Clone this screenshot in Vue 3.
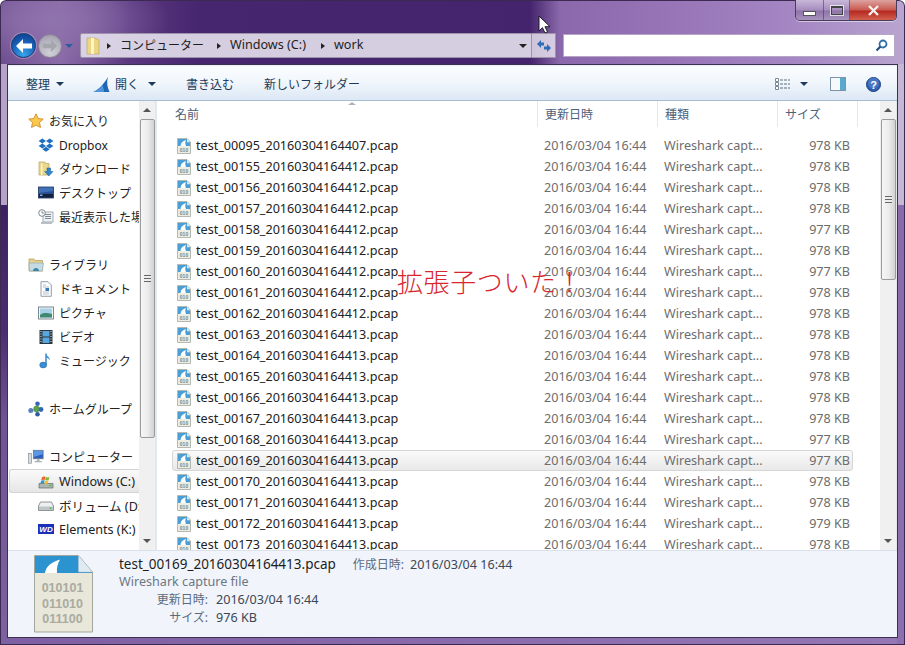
<script setup>
const sidebar = [
  { items: [
    { label: 'お気に入り', icon: 'i-star', head: true },
    { label: 'Dropbox', icon: 'i-dropbox' },
    { label: 'ダウンロード', icon: 'i-download' },
    { label: 'デスクトップ', icon: 'i-desktop' },
    { label: '最近表示した場所', icon: 'i-recent' },
  ] },
  { items: [
    { label: 'ライブラリ', icon: 'i-library', head: true },
    { label: 'ドキュメント', icon: 'i-doc' },
    { label: 'ピクチャ', icon: 'i-picture' },
    { label: 'ビデオ', icon: 'i-video' },
    { label: 'ミュージック', icon: 'i-music' },
  ] },
  { items: [{ label: 'ホームグループ', icon: 'i-home', head: true }] },
  { items: [
    { label: 'コンピューター', icon: 'i-computer', head: true },
    { label: 'Windows (C:)', icon: 'i-windows', active: true, wide: true },
    { label: 'ボリューム (D:)', icon: 'i-volume', wide: true },
    { label: 'Elements (K:)', icon: 'i-wd', wide: true },
  ] },
]

// [number, timestamp suffix, size]
const files = [
  ['00095', '164407', 978], ['00155', '164412', 978], ['00156', '164412', 978],
  ['00157', '164412', 978], ['00158', '164412', 977], ['00159', '164412', 978],
  ['00160', '164412', 977], ['00161', '164412', 978], ['00162', '164412', 978],
  ['00163', '164413', 978], ['00164', '164413', 978], ['00165', '164413', 978],
  ['00166', '164413', 978], ['00167', '164413', 978], ['00168', '164413', 977],
  ['00169', '164413', 977], ['00170', '164413', 978], ['00171', '164413', 978],
  ['00172', '164413', 979], ['00173', '164413', 978],
].map(([num, time, size]) => ({
  name: `test_${num}_20160304${time}.pcap`,
  size: `${size} KB`,
  selected: num === '00169',
}))
</script>

<template>
  <div class="window">
    <!-- shared icon shapes -->
    <svg class="defs" aria-hidden="true">
      <symbol id="i-star" viewBox="0 0 16 16">
        <path d="M8 .8l2.2 4.7 5 .6-3.7 3.4 1 5L8 12.1l-4.5 2.4 1-5L.8 6.1l5-.6z" fill="#f8c94e" stroke="#d58a25" stroke-width=".9" />
      </symbol>
      <symbol id="i-dropbox" viewBox="0 0 16 16">
        <path d="M4.3 1.5L.6 4l3.7 2.5L8 4zM11.7 1.5L8 4l3.7 2.5L15.4 4zM4.3 6.5L.6 9l3.7 2.5L8 9zM11.7 6.5L8 9l3.7 2.5L15.4 9zM4.3 12.2L8 14.8l3.7-2.6L8 9.8z" fill="#1f6fc4" />
      </symbol>
      <symbol id="i-download" viewBox="0 0 16 16">
        <path d="M1 1h6l1 1.5h3V14H1z" fill="#e9d78e" stroke="#b7a260" stroke-width=".7" />
        <path d="M3 2.5h1.5V14H3z" fill="#fff3c0" />
        <path d="M9 7h3.6v3.5H15L10.8 15 6.6 10.5H9z" fill="#2d86cf" stroke="#1c5b96" stroke-width=".5" />
      </symbol>
      <symbol id="i-desktop" viewBox="0 0 16 16">
        <rect x=".5" y="2" width="15" height="11" fill="#2a4f92" stroke="#22345f" stroke-width=".8" />
        <path d="M1 9h14v3.6H1z" fill="#14213e" />
        <path d="M2 9.5h2.5v1.6H2z" fill="#7fb0e6" />
        <path d="M1 2.5h14V6L1 8z" fill="#3f70b8" />
      </symbol>
      <symbol id="i-recent" viewBox="0 0 16 16">
        <rect x="5" y="3" width="10" height="10" fill="#eef2f5" stroke="#8c969e" stroke-width=".8" />
        <path d="M7 5.5h6M7 7.5h6M7 9.5h6" stroke="#7e8a93" stroke-width="1" />
        <path d="M3 13h11v2H3z" fill="#b9c0c5" />
        <circle cx="4" cy="4" r="3.3" fill="#fff" stroke="#7e8a93" />
        <path d="M4 2.2V4h1.8" fill="none" stroke="#55606a" stroke-width=".8" />
      </symbol>
      <symbol id="i-library" viewBox="0 0 16 16">
        <path d="M1 2h5l1 1.5h7.5V14H1z" fill="#e7d48c" stroke="#a99657" stroke-width=".7" />
        <path d="M1 6h14.5L14.500 14h-13z" fill="#c6dbe3" stroke="#8aa3ae" stroke-width=".6" />
        <path d="M5 14c0-4 6-4 6 0z" fill="#3b86a8" />
      </symbol>
      <symbol id="i-doc" viewBox="0 0 16 16">
        <path d="M3 .7h7L13.3 4v11.3H3z" fill="#fbfcfd" stroke="#8894a0" stroke-width=".9" />
        <path d="M5 4h3M5 6h6M5 11h6M5 13h6" stroke="#a9b2ba" stroke-width=".8" />
        <rect x="7.5" y="7" width="3.5" height="3" fill="#3b75b8" />
      </symbol>
      <symbol id="i-picture" viewBox="0 0 16 16">
        <rect x=".5" y="2" width="15" height="12" fill="#f4f7f8" stroke="#6f7d86" stroke-width=".9" />
        <rect x="2" y="3.5" width="12" height="9" fill="#a8d0e6" />
        <path d="M2 10c3-2.5 6-2.5 12-1v3.5H2z" fill="#3f8a6e" />
      </symbol>
      <symbol id="i-video" viewBox="0 0 16 16">
        <rect x="1.5" y="1" width="13" height="14" fill="#2c3640" />
        <rect x="4.5" y="2" width="7" height="5.5" fill="#57a6dd" />
        <rect x="4.5" y="8.5" width="7" height="5.5" fill="#57a6dd" />
        <path d="M2.5 2.5h1M2.5 5h1M2.5 7.500h1M2.500 10h1M2.500 12.500h1M12.500 2.500h1M12.500 5h1M12.500 7.500h1M12.500 10h1M12.500 12.500h1" stroke="#e6edf2" stroke-width="1.2" />
      </symbol>
      <symbol id="i-music" viewBox="0 0 16 16">
        <path d="M8 .6v11" stroke="#2f7fc6" stroke-width="1.4" />
        <path d="M8 .6c.5 3 4.600 3.200 3.600 7-.3-2-2-2.700-3.600-3.200z" fill="#3f95d8" />
        <ellipse cx="5.200" cy="12" rx="3.500" ry="2.900" fill="#3a8ed6" stroke="#215f9c" stroke-width=".5" />
      </symbol>
      <symbol id="i-home" viewBox="0 0 16 16">
        <path d="M8.500 8L9.500 2.800M8.500 8L13 8.500M8.500 8L9.500 13.200M8.500 8L2.800 9.500" stroke="#9bb4c8" stroke-width="1" />
        <circle cx="8.500" cy="8" r="3.200" fill="#58a14a" />
        <circle cx="9.500" cy="2.800" r="2.300" fill="#3565b5" />
        <circle cx="13" cy="8.500" r="2.400" fill="#3565b5" />
        <circle cx="9.500" cy="13.200" r="2.300" fill="#2f5aa6" />
        <circle cx="2.800" cy="9.500" r="2.500" fill="#5c7fc4" />
      </symbol>
      <symbol id="i-computer" viewBox="0 0 18 16">
        <rect x="6" y=".5" width="11" height="9.500" fill="#2a5fc0" stroke="#6d7a86" stroke-width=".9" />
        <path d="M6.500 1h10v4l-10 3z" fill="#5d96e6" />
        <path d="M10 10.500h3v2h2.500v1.500h-8v-1.500H10z" fill="#a8b2ba" />
        <rect x=".5" y="4" width="3.500" height="11" fill="#d9dee2" stroke="#7c868e" stroke-width=".7" />
      </symbol>
      <symbol id="i-windows" viewBox="0 0 16 16">
        <path d="M1 10.500h14V15H1z" fill="#a9b7b0" stroke="#5e6c68" stroke-width=".7" />
        <rect x="11" y="12" width="2.500" height="1.200" fill="#55c04a" />
        <path d="M4 4.200c1.300-.8 2.400-.8 3.500-.2l-.8 3c-1-.5-2.100-.5-3.400.2z" fill="#e8642c" />
        <path d="M8 4.100c1.100.6 2.200.6 3.400 0l-.8 3c-1.200.6-2.300.6-3.400 0z" fill="#7cb83a" />
        <path d="M3.200 7.700c1.300-.7 2.400-.7 3.400-.2l-.8 2.900c-1-.5-2.100-.5-3.400.2z" fill="#2c8fdc" />
        <path d="M7.100 7.600c1.100.6 2.200.6 3.400 0l-.8 3c-1.200.5-2.300.5-3.400-.1z" fill="#f4c22c" />
      </symbol>
      <symbol id="i-volume" viewBox="0 0 16 16">
        <path d="M2.500 5h11L15.500 9v4.500h-15V9z" fill="#eef0f0" stroke="#737c7f" stroke-width=".8" />
        <path d="M1 9.500h14v3.500H1z" fill="#bfc6c8" />
        <rect x="11.500" y="10.500" width="2.200" height="1.300" fill="#55c04a" />
      </symbol>
      <symbol id="i-wd" viewBox="0 0 16 16">
        <rect x="0" y="3" width="16" height="10" fill="#1d2fb8" />
        <text x="8" y="11.200" text-anchor="middle" font-family="Liberation Sans, sans-serif" font-size="8" font-weight="700" font-style="italic" fill="#fff">WD</text>
      </symbol>
      <symbol id="i-pcap" viewBox="0 0 14 16">
        <path d="M.5.500h9.500L13.500 4v11.500H.5z" fill="#eeede2" stroke="#a3a8a3" stroke-width=".8" />
        <path d="M1 1h8.800L13 4.200V8H1z" fill="#4a9fd6" />
        <path d="M3.500 8c.2-3.200 2.200-5 5.500-6-1 2-1 4 0 6z" fill="#fff" />
        <path d="M10 .8V4.200h3.200z" fill="#dbe8f0" />
        <text x="7" y="13.500" text-anchor="middle" font-family="Liberation Sans, sans-serif" font-size="5" font-weight="700" fill="#84867e">010</text>
      </symbol>
    </svg>

    <div class="titlebar">
      <div class="caption">
        <div class="cap-btn cap-min"><i></i></div>
        <div class="cap-btn cap-max"><i></i></div>
        <div class="cap-btn cap-close">
          <svg width="13" height="11" viewBox="0 0 13 11"><path d="M2 1l9 9M11 1l-9 9" stroke="#f3eded" stroke-width="2.400" /></svg>
        </div>
      </div>
    </div>

    <div class="navrow">
      <div class="nav-buttons">
        <div class="nav-circle back">
          <svg width="20" height="18" viewBox="0 0 20 18"><path d="M9 2L2 9l7 7v-4.500h9v-5H9z" fill="#fff" /></svg>
        </div>
        <div class="nav-circle forward">
          <svg width="18" height="16" viewBox="0 0 20 18"><path d="M11 2l7 7-7 7v-4.500H2v-5h9z" fill="#a5a7ab" /></svg>
        </div>
        <span class="nav-drop"></span>
      </div>

      <div class="address">
        <svg class="addr-folder" width="14" height="18" viewBox="0 0 14 18">
          <path d="M1 1h8l4 2v14H1z" fill="#ecd583" stroke="#bda658" stroke-width=".6" />
          <path d="M5 1h3v16H5z" fill="#fff6c8" />
        </svg>
        <span class="crumb-arrow"></span>
        <span class="crumb">コンピューター</span>
        <span class="crumb-arrow"></span>
        <span class="crumb wide">Windows (C:)</span>
        <span class="crumb-arrow"></span>
        <span class="crumb wide">work</span>
        <span class="addr-drop"></span>
      </div>

      <div class="refresh">
        <svg width="16" height="14" viewBox="0 0 16 14">
          <path d="M1 5l4-4v2.500h3v3H5V9z" fill="#2f6db5" />
          <path d="M15 9l-4 4v-2.500H8v-3h3V5z" fill="#2f6db5" />
        </svg>
      </div>

      <div class="search">
        <svg width="13" height="13" viewBox="0 0 13 13">
          <circle cx="8" cy="5" r="3.500" fill="none" stroke="#2f6fa8" stroke-width="1.800" />
          <path d="M5.500 7.500L1.500 11.500" stroke="#1f4f7c" stroke-width="2.200" />
        </svg>
      </div>
    </div>

    <div class="panel">
      <div class="toolbar">
        <span class="tool tool-organize">整理<b class="caret"></b></span>
        <span class="tool tool-open">
          <svg width="17" height="17" viewBox="0 0 17 17">
            <path d="M.5 16C5 14 11 8 15 1c-1.500 5-1 10 1.500 15z" fill="#1f66b5" />
            <path d="M.5 16C4 14.500 7 12 9.500 9c1 3 1.500 5 1.500 7z" fill="#4f96dc" />
          </svg>
          開く<b class="caret"></b>
        </span>
        <span class="tool tool-burn">書き込む</span>
        <span class="tool">新しいフォルダー</span>
        <span class="tool-right">
          <svg width="16" height="13" viewBox="0 0 16 13">
            <path d="M.5.500h3v3h-3zM.5 4.500h3v3h-3zM.5 8.500h3v3h-3z" fill="#fff" stroke="#7a8896" />
            <path d="M5 2h10M5 6h10M5 10h10" stroke="#5e6d7c" stroke-dasharray="3 1" />
          </svg>
          <b class="caret caret-view"></b>
          <svg class="pane-icon" width="16" height="14" viewBox="0 0 16 14">
            <rect x=".5" y=".5" width="15" height="13" fill="#f6f9fc" stroke="#7e93a8" />
            <rect x="10" y="1" width="5" height="12" fill="#5aa9cc" />
          </svg>
          <svg class="help-icon" width="15" height="15" viewBox="0 0 15 15">
            <circle cx="7.500" cy="7.500" r="7" fill="#2f5fae" stroke="#1e3f80" />
            <circle cx="7.500" cy="6" r="5.500" fill="#5a86cc" opacity=".6" />
            <text x="7.500" y="11.500" text-anchor="middle" font-family="Liberation Sans, sans-serif" font-size="11" font-weight="700" fill="#fff">?</text>
          </svg>
        </span>
      </div>

      <div class="main">
        <nav class="sidebar">
          <div v-for="(group, g) in sidebar" :key="g" class="side-group">
            <div
              v-for="item in group.items"
              :key="item.label"
              class="side-item"
              :class="{ head: item.head, active: item.active, wide: item.wide }"
            >
              <svg class="side-icon"><use :href="'#' + item.icon" /></svg>
              <span>{{ item.label }}</span>
            </div>
          </div>
        </nav>

        <div class="scrollbar">
          <span class="sb-up"></span>
          <div class="thumb thumb-side"><i class="grip"></i></div>
          <span class="sb-down"></span>
        </div>

        <section class="list">
          <div class="list-head">
            <span class="sort-arrow"></span>
            <div class="col col-name">名前</div>
            <div class="col col-date">更新日時</div>
            <div class="col col-type">種類</div>
            <div class="col col-size">サイズ</div>
          </div>
          <div class="rows">
            <div v-for="f in files" :key="f.name" class="row" :class="{ selected: f.selected }">
              <svg class="file-icon"><use href="#i-pcap" /></svg>
              <span class="fname">{{ f.name }}</span>
              <span class="meta">2016/03/04 16:44</span>
              <span class="meta">Wireshark capt...</span>
              <span class="meta size">{{ f.size }}</span>
            </div>
          </div>
          <div class="note">拡張子ついた！</div>
        </section>

        <div class="scrollbar">
          <span class="sb-up"></span>
          <div class="thumb thumb-list"><i class="grip"></i></div>
          <span class="sb-down"></span>
        </div>
      </div>

      <div class="details">
        <svg class="big-icon" width="59" height="78" viewBox="0 0 59 78">
          <path d="M.5.500h44L58.500 17v60H.5z" fill="#e8e7da" stroke="#a3a69c" />
          <path d="M1 1h43.500L58 17v1H1z" fill="#2b93cf" />
          <path d="M11 18c1-7 7-11 15-13.500-2.500 4-3.500 9-3 13.500z" fill="#fff" />
          <path d="M44.500.500L58.500 17H44.500z" fill="#dfeaf1" stroke="#b4c3cc" stroke-width=".5" />
          <g font-family="Liberation Sans, sans-serif" font-size="12.500" font-weight="700" fill="#a9aba1" text-anchor="middle">
            <text x="28.500" y="37">010101</text>
            <text x="28.500" y="53">011010</text>
            <text x="28.500" y="68">011100</text>
          </g>
        </svg>
        <div class="detail-text">
          <div class="d-title">
            <span class="d-name">test_00169_20160304164413.pcap</span>
            <span class="d-label">作成日時:</span>
            <span class="d-value">2016/03/04 16:44</span>
          </div>
          <div class="d-kind">Wireshark capture file</div>
          <div class="d-prop"><span class="d-label">更新日時:</span><span class="d-value">2016/03/04 16:44</span></div>
          <div class="d-prop"><span class="d-label">サイズ:</span><span class="d-value">976 KB</span></div>
        </div>
      </div>
    </div>

    <!-- mouse pointer caught in the screenshot -->
    <svg class="pointer" width="13" height="19" viewBox="0 0 13 19">
      <path d="M1 1v15l3.500-3.300 2.500 5.300 2.500-1.200-2.500-5.100h5z" fill="#fff" stroke="#111" stroke-width=".9" />
    </svg>
  </div>
</template>

<style>
html, body { margin: 0; overflow: hidden; }
</style>

<style scoped>
.window {
  position: relative;
  width: 905px;
  height: 645px;
  box-sizing: border-box;
  padding: 0 8px 8px;
  display: flex;
  flex-direction: column;
  overflow: hidden;
  font-family: "Noto Sans", "Noto Sans CJK JP", sans-serif;
  font-size: 12px;
  color: #1e1e1e;
  border-radius: 6px 6px 0 0;
  box-shadow: inset 0 0 0 1px #3c2a52;
  background:
    linear-gradient(180deg, transparent 64px, #b5a4c8 64px, #b5a4c8 205px, #3d2263 205px, #4a2d70 330px, #6f5495 420px, #7c62a0 100%) 0 0 / 8px 100% no-repeat,
    linear-gradient(180deg, transparent 64px, #c5b8d5 64px, #c5b8d5 205px, #8a6aab 205px, #8d6eae 100%) 100% 0 / 8px 100% no-repeat,
    linear-gradient(90deg, #7d5fa3, #9478b5) 0 100% / 100% 8px no-repeat,
    radial-gradient(ellipse 120px 50px at 50px 20px, #8f73ad 0%, rgba(143, 115, 173, 0) 100%),
    linear-gradient(90deg, #6a4a8c 0, #8a6aa6 60px, #5a3880 130px, #46266e 200px, #44246c 530px, #8a68ab 560px, #9a78ba 700px, #a688c4 800px, #b8a4cf 900px);
}

.defs { display: none; }

/* title bar, just the caption buttons on the right */
.titlebar { height: 33px; display: flex; justify-content: flex-end; flex-shrink: 0; }
.caption {
  display: flex;
  height: 20px;
  border: 1px solid #4a3a5c;
  border-top: 0;
  border-radius: 0 0 5px 5px;
  overflow: hidden;
  box-shadow: 0 1px 0 rgba(255, 255, 255, .5);
}
.cap-btn { display: flex; align-items: center; justify-content: center; border-right: 1px solid rgba(60, 40, 80, .5); }
.cap-min { width: 27px; background: linear-gradient(#c9b8da, #a58cbd 50%, #8d74a8 55%, #a894bd); }
.cap-max { width: 25px; background: linear-gradient(#c9b8da, #a58cbd 50%, #8d74a8 55%, #a894bd); }
.cap-close { width: 46px; border-right: 0; background: linear-gradient(#dca39f, #c9584f 50%, #b5281f 55%, #d2604f); }
.cap-min i { width: 11px; height: 3px; margin-top: 6px; background: #fff; border: 1px solid #555; }
.cap-max i { width: 10px; height: 6px; background: transparent; border: 1px solid #444; border-top-width: 2px; box-shadow: 0 0 0 1px rgba(255, 255, 255, .7); }

/* navigation row */
.navrow { display: flex; align-items: center; height: 25px; flex-shrink: 0; margin-bottom: 7px; }
.nav-buttons { display: flex; align-items: center; width: 72px; padding-left: 3px; box-sizing: border-box; flex-shrink: 0; }
.nav-circle { border-radius: 50%; display: flex; align-items: center; justify-content: center; box-sizing: border-box; }
.back {
  width: 25px;
  height: 25px;
  border: 1px solid #1c3f78;
  background: radial-gradient(circle at 50% 90%, #38a5ea 0, #1760b8 55%, #0c3a86 100%);
  box-shadow: 0 0 0 1px rgba(255, 255, 255, .25);
}
.forward {
  width: 24px;
  height: 24px;
  margin-left: 2px;
  border: 1px solid #8c8694;
  background: radial-gradient(circle at 50% 80%, #d0d0d8 0, #b4b2bf 60%, #9a94a8 100%);
}
.nav-drop {
  margin-left: 3px;
  width: 0;
  height: 0;
  border-left: 4px solid transparent;
  border-right: 4px solid transparent;
  border-top: 4px solid #2e5c9c;
}
.address {
  width: 452px;
  height: 25px;
  box-sizing: border-box;
  display: flex;
  align-items: center;
  padding-left: 5px;
  background: rgba(226, 220, 234, .92);
  border: 1px solid #9f93ab;
  border-radius: 2px 0 0 2px;
  color: #1e1e1e;
  position: relative;
  flex-shrink: 0;
}
.addr-folder { margin-right: 7px; }
.crumb-arrow {
  width: 0;
  height: 0;
  border-top: 3.5px solid transparent;
  border-bottom: 3.5px solid transparent;
  border-left: 4px solid #222;
}
.crumb { margin: -2px 13px 0 9px; white-space: nowrap; }
.crumb.wide { font-size: 12.6px; margin-right: 15px; }
.addr-drop {
  margin-left: auto;
  margin-right: 4px;
  width: 0;
  height: 0;
  border-left: 4px solid transparent;
  border-right: 4px solid transparent;
  border-top: 4px solid #222;
}
.refresh {
  width: 24px;
  height: 25px;
  box-sizing: border-box;
  display: flex;
  align-items: center;
  justify-content: center;
  border: 1px solid #9f93ab;
  border-left: 0;
  background: rgba(226, 220, 234, .88);
  flex-shrink: 0;
}
.search {
  margin: 0 2px 0 7px;
  flex: 1;
  height: 23px;
  box-sizing: border-box;
  display: flex;
  align-items: center;
  justify-content: flex-end;
  padding-right: 6px;
  background: #fff;
  border: 1px solid #b5a5c6;
}

/* content area */
.panel {
  flex: 1;
  min-height: 0;
  display: flex;
  flex-direction: column;
  background: #fff;
  box-shadow: 0 0 0 1px #3f3050;
}
.toolbar {
  height: 36px;
  flex-shrink: 0;
  box-sizing: border-box;
  display: flex;
  align-items: center;
  padding: 2px 0 0 18px;
  color: #1e3a5a;
  border-top: 1px solid #e8eef6;
  border-bottom: 1px solid #a9bdd2;
  background: linear-gradient(#fbfdff, #f2f7fc 45%, #dce8f5);
}
.tool { display: flex; align-items: center; margin-right: 30px; white-space: nowrap; }
.tool-organize { margin-right: 29px; }
.tool-open svg { margin-right: 5px; }
.tool-burn { margin-right: 30px; }
.caret {
  width: 0;
  height: 0;
  margin-left: 6px;
  border-left: 4px solid transparent;
  border-right: 4px solid transparent;
  border-top: 4px solid #1e3a5a;
}
.tool-open .caret { margin-left: 9px; }
.tool-right { margin-left: auto; display: flex; align-items: center; padding-right: 16px; }
.caret-view { margin-left: 9px; }
.pane-icon { margin-left: 22px; }
.help-icon { margin-left: 20px; }

.main { flex: 1; min-height: 0; display: flex; }

.sidebar {
  width: 131px;
  flex-shrink: 0;
  padding-top: 8px;
  box-sizing: border-box;
  overflow: hidden;
}
.side-group { margin-bottom: 24px; }
.side-item {
  height: 24px;
  display: flex;
  align-items: center;
  padding-left: 28px;
  white-space: nowrap;
  box-sizing: border-box;
  margin-left: 1px;
  border: 1px solid transparent;
  border-right: 0;
  color: #222;
}
.side-item.head { padding-left: 18px; }
.side-item.wide { font-size: 12.6px; }
.side-item.active {
  background: linear-gradient(#fafafa, #e6e6e6);
  border-color: #d4d4d4;
  border-radius: 3px 0 0 3px;
}
.side-icon { width: 16px; height: 16px; margin-right: 5px; flex-shrink: 0; }

.scrollbar {
  width: 16px;
  flex-shrink: 0;
  display: flex;
  flex-direction: column;
  align-items: center;
  background: #f0f0f0;
  border-right: 1px solid #e4e6ea;
}
.scrollbar + .list { border-left: 1px solid #e3e8ee; }
.sb-up, .sb-down {
  width: 0;
  height: 0;
  border-left: 4px solid transparent;
  border-right: 4px solid transparent;
  flex-shrink: 0;
}
.sb-up { margin: 7px 0 7px; border-bottom: 4px solid #555; }
.sb-down { margin: auto 0 7px; border-top: 4px solid #555; }
.thumb {
  width: 15px;
  box-sizing: border-box;
  display: flex;
  align-items: center;
  justify-content: center;
  border: 1px solid #9b9b9b;
  border-radius: 2px;
  background: linear-gradient(90deg, #f6f6f6, #ececec 50%, #d2d2d2);
}
.thumb-side { height: 319px; }
.thumb-list { height: 161px; }
.grip {
  width: 7px;
  height: 7px;
  background: repeating-linear-gradient(#666 0, #666 1px, #eee 1px, #eee 3px);
}

.list {
  position: relative;
  flex: 1;
  min-width: 0;
  overflow: hidden;
}
.list-head {
  position: relative;
  height: 26px;
  display: grid;
  grid-template-columns: 381px 120px 120px 80px;
  align-items: center;
  color: #4c607a;
}
.col { padding-left: 7px; height: 100%; display: flex; align-items: center; border-right: 1px solid #e3e8ee; box-sizing: border-box; }
.col-name { padding-left: 18px; }
.sort-arrow {
  position: absolute;
  left: 191px;
  top: 1px;
  width: 0;
  height: 0;
  border-left: 4px solid transparent;
  border-right: 4px solid transparent;
  border-bottom: 3px solid #a9b5c4;
}
.rows { padding: 8px 0 0 15px; }
.row {
  width: 681px;
  height: 21px;
  display: grid;
  grid-template-columns: 19px 348px 120px 120px 1fr;
  align-items: center;
  box-sizing: border-box;
  padding: 0 2px 0 5px;
  border: 1px solid transparent;
  border-left-width: 0;
  white-space: nowrap;
  font-size: 12.6px;
}
.row.selected {
  background: linear-gradient(#fafafa, #e9e9e9);
  border: 1px solid #d6d6d6;
  border-radius: 3px;
  padding-left: 4px;
}
.file-icon { width: 14px; height: 16px; }
.fname { color: #222; }
.meta { color: #6d6d6d; }
.size { text-align: right; }
.note {
  position: absolute;
  left: 240px;
  top: 162px;
  font-size: 26px;
  line-height: 36px;
  letter-spacing: .6px;
  color: #d8262e;
  white-space: nowrap;
  font-family: "Noto Sans CJK JP", sans-serif;
  font-weight: 300;
}

.details {
  height: 87px;
  flex-shrink: 0;
  box-sizing: border-box;
  display: flex;
  padding: 4px 0 0 26px;
  background: #f1f5fb;
  border-top: 1px solid #d9e2ec;
}
.big-icon { flex-shrink: 0; }
.detail-text { margin-left: 26px; }
.d-title, .d-kind, .d-prop { height: 18px; line-height: 18px; white-space: nowrap; }
.d-name { font-size: 13.5px; color: #1e1e1e; margin-right: 17px; }
.d-label { color: #5c6b7c; }
.d-value { color: #3c4754; margin-left: 6px; font-size: 12.6px; }
.d-kind { color: #6d7682; font-size: 12.6px; }
.d-prop { display: flex; }
.d-prop .d-label { width: 89px; text-align: right; }
.d-prop .d-value { margin-left: 8px; }

.pointer { position: absolute; left: 538px; top: 15px; }
</style>
